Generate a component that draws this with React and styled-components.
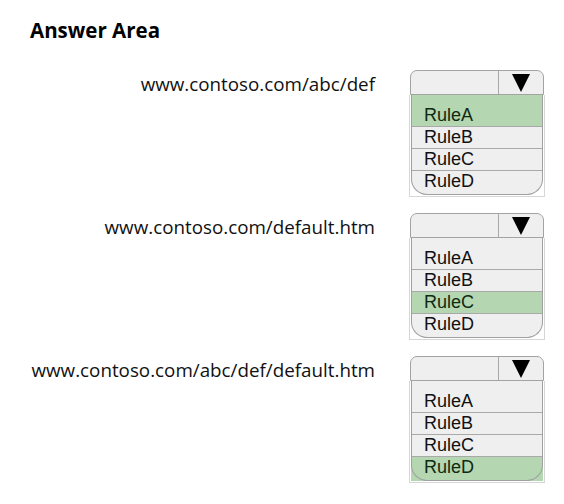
import styled, { createGlobalStyle } from 'styled-components';

const RULES = ['RuleA', 'RuleB', 'RuleC', 'RuleD'];

const questions = [
  { url: 'www.contoso.com/abc/def', answer: 'RuleA' },
  { url: 'www.contoso.com/default.htm', answer: 'RuleC' },
  { url: 'www.contoso.com/abc/def/default.htm', answer: 'RuleD' },
];

function Dropdown({ answer }) {
  return (
    <Select>
      <Header>
        <Field />
        <ArrowBox>
          <Triangle />
        </ArrowBox>
      </Header>
      <List>
        {RULES.map((rule, i) => (
          <Item
            key={rule}
            $selected={rule === answer}
            $first={i === 0}
            $last={i === RULES.length - 1}
          >
            {rule}
          </Item>
        ))}
      </List>
    </Select>
  );
}

export default function App() {
  return (
    <>
      <GlobalStyle />
      <Page>
        <Title>Answer Area</Title>
        <Rows>
          {questions.map((q) => (
            <Row key={q.url}>
              <Label>{q.url}</Label>
              <Dropdown answer={q.answer} />
            </Row>
          ))}
        </Rows>
      </Page>
    </>
  );
}

const GlobalStyle = createGlobalStyle`
  body {
    margin: 0;
    background: #ffffff;
    font-family: "Open Sans", "Noto Sans", sans-serif;
    color: #111111;
  }
`;

const Page = styled.div`
  width: 564px;
  height: 504px;
  padding: 16px 20px 0 30px;
  box-sizing: border-box;
`;

const Title = styled.h1`
  margin: 0 0 26px;
  font-size: 20.5px;
  line-height: 28px;
  font-weight: 700;
  color: #000;
`;

const Rows = styled.div`
  display: flex;
  flex-direction: column;
  gap: 16px;
`;

const Row = styled.div`
  display: grid;
  grid-template-columns: 345px 134px;
  column-gap: 35px;
  align-items: start;
`;

const Label = styled.div`
  justify-self: end;
  font-size: 18.8px;
  line-height: 24px;
  padding-top: 2px;
  white-space: nowrap;
  color: #111;
`;

const Select = styled.div`
  width: 134px;
  display: flex;
  flex-direction: column;
`;

const Header = styled.div`
  height: 23px;
  display: flex;
  border: 1.5px solid #a3a3a3;
  border-radius: 7px 7px 0 0;
  background: #efefef;
`;

const Field = styled.div`
  flex: 1;
`;

const ArrowBox = styled.div`
  width: 44px;
  border-left: 1.5px solid #a8a8a8;
  display: flex;
  align-items: center;
  justify-content: center;
`;

const Triangle = styled.div`
  width: 0;
  height: 0;
  border-left: 9.5px solid transparent;
  border-right: 9.5px solid transparent;
  border-top: 18px solid #000;
`;

const List = styled.div`
  position: relative;
  margin: 0 -1px;
  border: 1px solid #d6d6d6;
  border-top: none;
  padding-bottom: 1px;
  background: #fff;

  &::after {
    content: '';
    position: absolute;
    inset: 0 1px 1px 1px;
    border: 1.5px solid #a0a0a0;
    border-top: none;
    border-radius: 0 0 16px 16px;
    pointer-events: none;
  }
`;

const Item = styled.div`
  height: ${(p) => (p.$first ? 31 : p.$last ? 25 : 22)}px;
  display: flex;
  align-items: flex-end;
  box-sizing: border-box;
  padding: 0 0 ${(p) => (p.$last ? 3 : 0)}px 13px;
  font-family: "Liberation Sans", Arial, sans-serif;
  font-size: 18px;
  line-height: 21px;
  color: ${(p) => (p.$selected ? '#0f2a12' : '#111')};
  background: ${(p) => (p.$selected ? '#b4d6b1' : '#efefef')};
  border-top: ${(p) => (p.$first ? 'none' : '1px solid #a9a9a9')};
  border-radius: ${(p) => (p.$last && !p.$selected ? '0 0 16px 16px' : '0')};
  margin: 0 1px;
`;
